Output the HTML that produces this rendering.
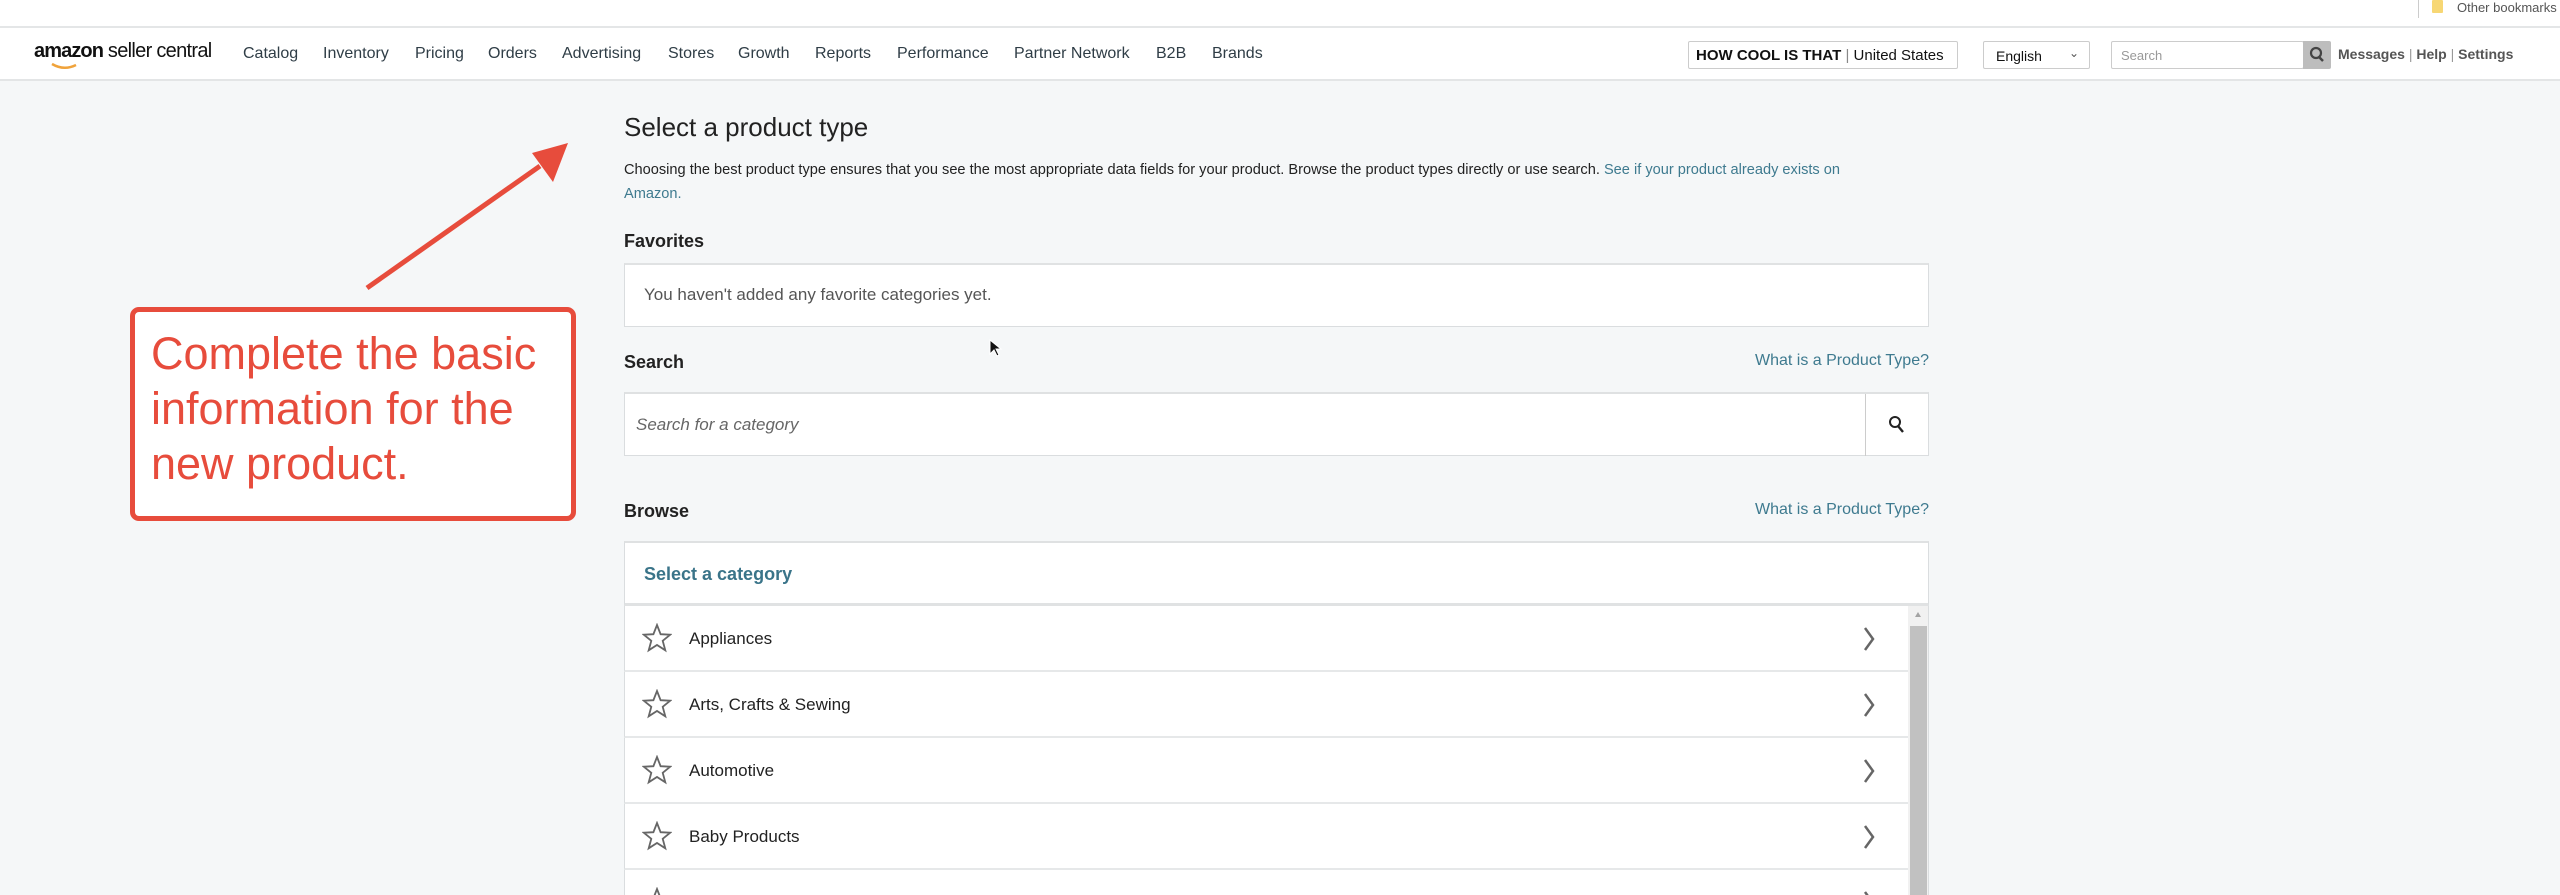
<!DOCTYPE html>
<html><head><meta charset="utf-8"><style>
*{margin:0;padding:0;box-sizing:border-box}
html{width:2560px;height:895px;overflow:hidden}
body{width:2560px;height:895px;overflow:hidden;background:#f5f7f8;font-family:"Liberation Sans",Arial,sans-serif;position:relative;color:#0f1111}
.a{position:absolute;white-space:nowrap}
.top{position:absolute;left:0;top:0;width:2560px;height:28px;background:#fff;border-bottom:2px solid #e4e6e7}
.nav{position:absolute;left:0;top:28px;width:2560px;height:53px;background:#fff;border-bottom:2px solid #e3e5e6}
.ni{position:absolute;top:17px;font-size:16px;color:#2f3d46}
.link{color:#3e7a8f}
.box{position:absolute;background:#fff;border:1px solid #dadddf}
.row{position:absolute;left:624px;width:1284px;height:66px;background:#fff;border-bottom:2px solid #e6e8e9;border-left:1px solid #dadddf}
.row span{position:absolute;left:64px;top:23px;font-size:17px;color:#222}
.row svg.s{position:absolute;left:17px;top:17px}
.row svg.c{position:absolute;left:1238px;top:20px}
</style></head><body>
<div class="top">
 <div class="a" style="left:2418px;top:0;width:1px;height:18px;background:#ccc"></div>
 <div class="a" style="left:2432px;top:0;width:11px;height:13px;background:#f7d774;border-radius:1px"></div>
 <div class="a" style="left:2457px;top:0;font-size:13px;color:#555">Other bookmarks</div>
</div>
<div class="nav">
 <div class="a" style="left:34px;top:12px;font-size:20px;font-weight:bold;color:#111;letter-spacing:-0.9px">amazon<span style="font-weight:normal;letter-spacing:-0.7px"> seller central</span></div>
 <svg class="a" style="left:50px;top:34px" width="30" height="9"><path d="M2 2 Q14 9 26 3" stroke="#f0a33b" stroke-width="2.5" fill="none"/></svg>
 <div class="ni" style="left:243px">Catalog</div>
 <div class="ni" style="left:323px">Inventory</div>
 <div class="ni" style="left:415px">Pricing</div>
 <div class="ni" style="left:488px">Orders</div>
 <div class="ni" style="left:562px">Advertising</div>
 <div class="ni" style="left:668px">Stores</div>
 <div class="ni" style="left:738px">Growth</div>
 <div class="ni" style="left:815px">Reports</div>
 <div class="ni" style="left:897px">Performance</div>
 <div class="ni" style="left:1014px">Partner Network</div>
 <div class="ni" style="left:1156px">B2B</div>
 <div class="ni" style="left:1212px">Brands</div>
 <div class="a" style="left:1688px;top:13px;width:270px;height:28px;border:1px solid #ccc;border-radius:2px;font-size:15px;padding:5px 7px;color:#111"><b>HOW COOL IS THAT</b> <span style="color:#888">|</span> United States</div>
 <div class="a" style="left:1983px;top:13px;width:107px;height:28px;border:1px solid #ccc;border-radius:2px;font-size:14px;padding:6px 12px;color:#111">English<span style="position:absolute;right:10px;top:4px;font-size:12px;color:#555">&#8964;</span></div>
 <div class="a" style="left:2111px;top:13px;width:193px;height:28px;border:1px solid #ccc;border-radius:2px;font-size:13px;padding:6px 9px;color:#999">Search</div>
 <div class="a" style="left:2303px;top:13px;width:28px;height:28px;background:#bdbdbd;border-radius:0 2px 2px 0"><svg width="28" height="28"><circle cx="13" cy="12" r="5" stroke="#444" stroke-width="2.2" fill="none"/><path d="M16 16l4 4" stroke="#444" stroke-width="2.5"/></svg></div>
 <div class="a" style="left:2338px;top:18px;font-size:14px;font-weight:bold;color:#555">Messages <span style="font-weight:normal;color:#999">|</span> Help <span style="font-weight:normal;color:#999">|</span> Settings</div>
</div>

<div class="a" style="left:624px;top:112px;font-size:26px;color:#222">Select a product type</div>
<div class="a" style="left:624px;top:162px;font-size:14.6px;color:#222">Choosing the best product type ensures that you see the most appropriate data fields for your product. Browse the product types directly or use search. <span class="link">See if your product already exists on</span></div>
<div class="a link" style="left:624px;top:186px;font-size:14.6px">Amazon.</div>
<div class="a" style="left:624px;top:231px;font-size:18px;font-weight:bold;color:#222">Favorites</div>
<div class="box" style="left:624px;top:263px;width:1305px;height:64px;border-top:2px solid #e0e2e3"><div class="a" style="left:19px;top:20px;font-size:17px;color:#555">You haven't added any favorite categories yet.</div></div>
<div class="a" style="left:624px;top:352px;font-size:18px;font-weight:bold;color:#222">Search</div>
<div class="a link" style="right:631px;top:352px;font-size:16px">What is a Product Type?</div>
<div class="box" style="left:624px;top:392px;width:1305px;height:64px;border-top:2px solid #dfe1e2"><div class="a" style="left:11px;top:21px;font-size:17px;font-style:italic;color:#666">Search for a category</div><div class="a" style="left:1240px;top:0;width:1px;height:62px;background:#ccc"></div><svg class="a" style="left:1261px;top:20px" width="22" height="22"><circle cx="9" cy="8" r="5" stroke="#222" stroke-width="2" fill="none"/><path d="M12 12l5 6" stroke="#222" stroke-width="2.4"/></svg></div>
<div class="a" style="left:624px;top:501px;font-size:18px;font-weight:bold;color:#222">Browse</div>
<div class="a link" style="right:631px;top:501px;font-size:16px">What is a Product Type?</div>
<div class="box" style="left:624px;top:541px;width:1305px;height:65px;border-top:2px solid #dfe1e2;border-bottom:3px solid #e0e2e3"><div class="a" style="left:19px;top:21px;font-size:18px;font-weight:bold;color:#3a7489">Select a category</div></div>

<div class="row" style="top:606px"><svg class="s" width="30" height="30"><path d="M15 2l3.6 9.2 9.6.5-7.5 6.1 2.6 9.5L15 22l-8.3 5.3 2.6-9.5-7.5-6.1 9.6-.5z" stroke="#666" stroke-width="1.8" fill="none"/></svg><span>Appliances</span><svg class="c" width="14" height="26"><path d="M2 2l8 11-8 11" stroke="#666" stroke-width="2.5" fill="none"/></svg></div>
<div class="row" style="top:672px"><svg class="s" width="30" height="30"><path d="M15 2l3.6 9.2 9.6.5-7.5 6.1 2.6 9.5L15 22l-8.3 5.3 2.6-9.5-7.5-6.1 9.6-.5z" stroke="#666" stroke-width="1.8" fill="none"/></svg><span>Arts, Crafts &amp; Sewing</span><svg class="c" width="14" height="26"><path d="M2 2l8 11-8 11" stroke="#666" stroke-width="2.5" fill="none"/></svg></div>
<div class="row" style="top:738px"><svg class="s" width="30" height="30"><path d="M15 2l3.6 9.2 9.6.5-7.5 6.1 2.6 9.5L15 22l-8.3 5.3 2.6-9.5-7.5-6.1 9.6-.5z" stroke="#666" stroke-width="1.8" fill="none"/></svg><span>Automotive</span><svg class="c" width="14" height="26"><path d="M2 2l8 11-8 11" stroke="#666" stroke-width="2.5" fill="none"/></svg></div>
<div class="row" style="top:804px"><svg class="s" width="30" height="30"><path d="M15 2l3.6 9.2 9.6.5-7.5 6.1 2.6 9.5L15 22l-8.3 5.3 2.6-9.5-7.5-6.1 9.6-.5z" stroke="#666" stroke-width="1.8" fill="none"/></svg><span>Baby Products</span><svg class="c" width="14" height="26"><path d="M2 2l8 11-8 11" stroke="#666" stroke-width="2.5" fill="none"/></svg></div>
<div class="row" style="top:870px;height:25px;border-bottom:none"><svg class="s" width="30" height="30"><path d="M15 2l3.6 9.2 9.6.5-7.5 6.1 2.6 9.5L15 22l-8.3 5.3 2.6-9.5-7.5-6.1 9.6-.5z" stroke="#666" stroke-width="1.8" fill="none"/></svg><svg class="c" width="14" height="26"><path d="M2 2l8 11-8 11" stroke="#666" stroke-width="2.5" fill="none"/></svg></div>
<div class="a" style="left:1908px;top:606px;width:21px;height:289px;background:#f1f1f1;border-right:1px solid #dadddf"></div>
<div class="a" style="left:1910px;top:626px;width:17px;height:269px;background:#c1c1c1"></div>
<svg class="a" style="left:1913px;top:611px" width="10" height="8"><path d="M5 1l3 5H2z" fill="#a3a3a3"/></svg>

<svg class="a" style="left:360px;top:130px" width="220" height="170"><path d="M7 158L180 36" stroke="#e74c3c" stroke-width="5"/><path d="M208 13L172 23 193 52z" fill="#e74c3c"/></svg>
<div class="a" style="left:130px;top:307px;width:446px;height:214px;border:5px solid #e74c3c;border-radius:9px;background:#fff"></div>
<div class="a" style="left:151px;top:326px;font-size:45px;line-height:55px;color:#e74c3c">Complete the basic<br>information for the<br>new product.</div>
<svg class="a" style="left:989px;top:339px" width="14" height="20"><path d="M1 1v14l4-4 3 6 2-1-3-6h5z" fill="#111" stroke="#fff" stroke-width="1"/></svg>
</body></html>
